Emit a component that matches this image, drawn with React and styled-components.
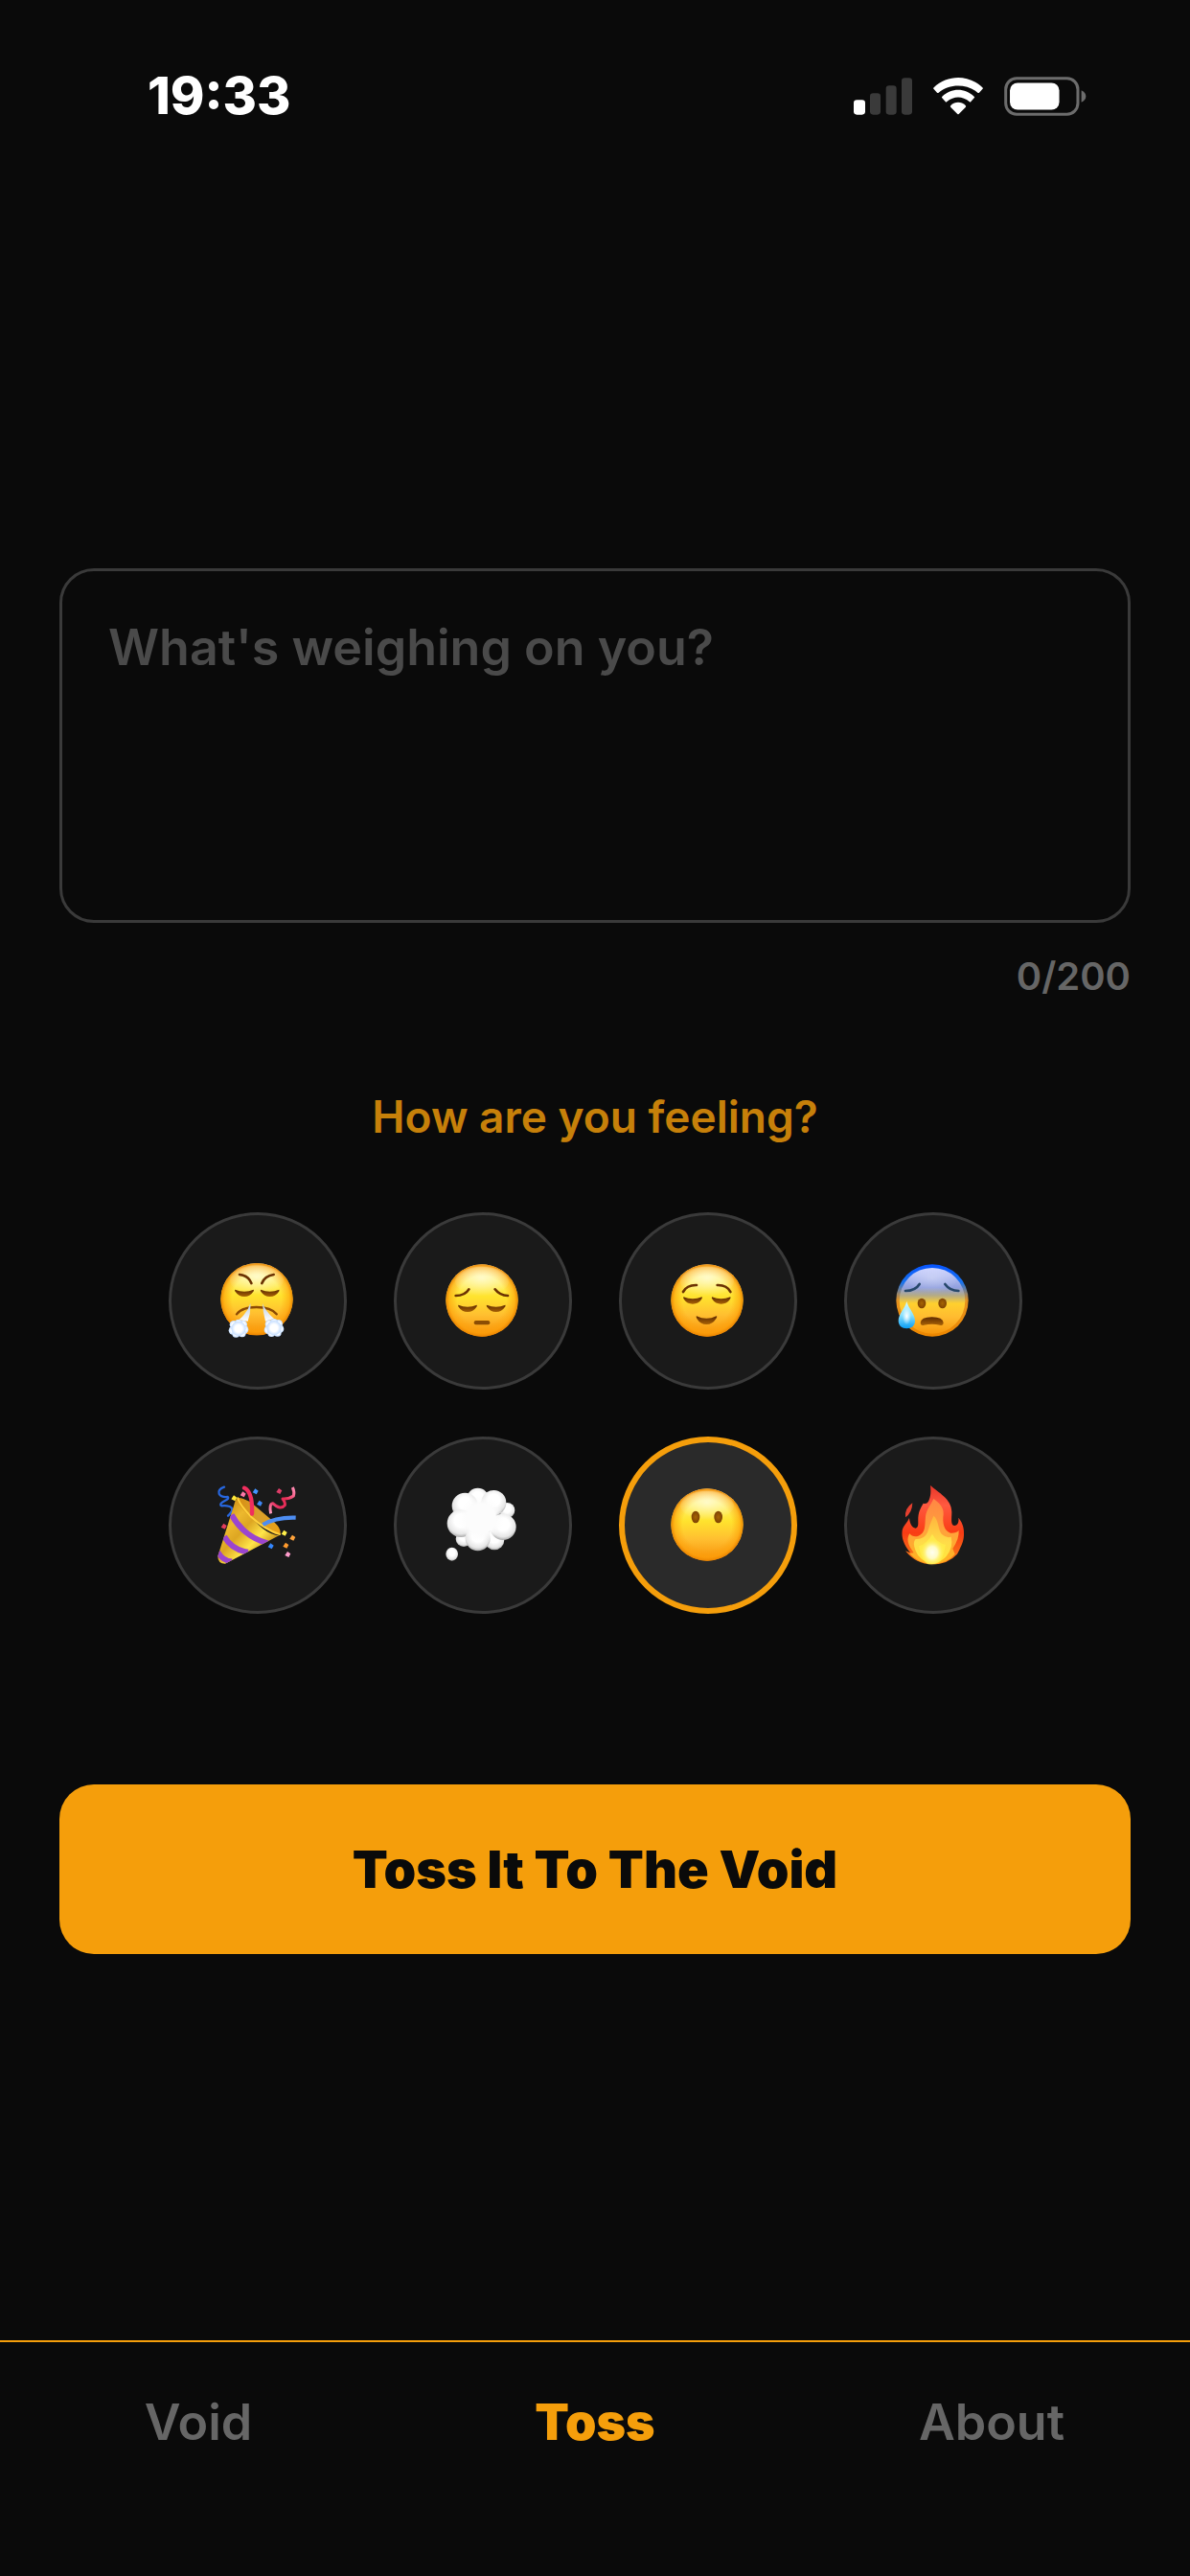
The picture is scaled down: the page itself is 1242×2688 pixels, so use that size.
import React, { useState } from 'react';
import styled, { createGlobalStyle } from 'styled-components';

const GlobalStyle = createGlobalStyle`
  * {
    box-sizing: border-box;
  }

  body {
    margin: 0;
    background: #0a0a0a;
    font-family: Inter, 'Liberation Sans', sans-serif;
  }

  button,
  textarea {
    font-family: inherit;
  }
`;

const Screen = styled.div`
  display: flex;
  flex-direction: column;
  min-height: 100vh;
  background: #0a0a0a;
`;

const StatusBar = styled.header`
  display: flex;
  align-items: center;
  justify-content: space-between;
  padding: 68px 108px 58px 154px;
`;

const Time = styled.span`
  color: #fff;
  font-size: 54px;
  line-height: 64px;
  font-weight: 800;
`;

const StatusIcons = styled.div`
  display: flex;
  align-items: center;
  gap: 22px;
`;

const Main = styled.main`
  display: flex;
  flex: 1;
  flex-direction: column;
  justify-content: center;
  padding: 0 62px;
`;

const ThoughtInput = styled.textarea`
  display: block;
  width: 100%;
  height: 370px;
  padding: 47px 48px;
  border: 3px solid #3a3a3a;
  border-radius: 36px;
  outline: none;
  resize: none;
  background: transparent;
  color: #fff;
  font-size: 52px;
  line-height: 66px;
  font-weight: 600;

  &::placeholder {
    color: #4a4a4a;
    opacity: 1;
  }
`;

const Counter = styled.span`
  margin-top: 31px;
  color: #666;
  font-size: 40px;
  line-height: 50px;
  font-weight: 600;
  text-align: right;
`;

const Question = styled.h2`
  margin: 92px 0 71px;
  color: #f59e0b;
  font-size: 46px;
  line-height: 58px;
  font-weight: 600;
  text-align: center;
  opacity: .8;
`;

const MoodGrid = styled.div`
  display: grid;
  grid-template-columns: repeat(4, 186px);
  justify-content: center;
  gap: 49px;
`;

const MoodButton = styled.button`
  display: flex;
  align-items: center;
  justify-content: center;
  height: 185px;
  padding: 0;
  border: ${props => props.$selected ? '6px solid #f59e0b' : '3px solid #3a3a3a'};
  border-radius: 50%;
  background: ${props => props.$selected ? '#2a2a2a' : '#1a1a1a'};
  cursor: pointer;
`;

const TossButton = styled.button`
  margin-top: 178px;
  padding: 56px;
  border: 0;
  border-radius: 36px;
  background: #f59e0b;
  color: #0a0a0a;
  font-size: 54px;
  line-height: 65px;
  font-weight: 900;
  cursor: pointer;
`;

const TabBar = styled.nav`
  display: grid;
  grid-template-columns: repeat(3, 1fr);
  padding: 48px 0 124px;
  border-top: 2px solid #f59e0b;
`;

const Tab = styled.a`
  color: ${props => props.$active ? '#f59e0b' : '#666'};
  font-size: 52px;
  line-height: 72px;
  font-weight: ${props => props.$active ? 900 : 600};
  text-align: center;
  text-decoration: none;
`;

const SignalIcon = () => (
  <svg width="61" height="39" viewBox="0 0 183 117" aria-hidden="true">
    <rect x="0" y="70" width="36" height="46" rx="10" fill="#fff" />
    <g fill="#3a3a3a">
      <rect x="51" y="49" width="33" height="67" rx="10" />
      <rect x="101" y="25" width="33" height="91" rx="10" />
      <rect x="150" y="1" width="33" height="115" rx="10" />
    </g>
  </svg>
);

const WifiIcon = () => (
  <svg width="52" height="39" viewBox="0 0 156 117" fill="#fff" aria-hidden="true">
    <path d="M2 31C45 -10 111 -10 154 31Q157 34 154 36L144 47Q142 49 139 47C105 18 51 18 17 47Q14 49 12 47L2 36Q-1 34 2 31Z" />
    <path d="M28 59C57 31 99 31 128 59Q131 62 128 64L118 75Q116 78 113 75C92 57 64 57 43 75Q40 78 38 75L28 64Q25 62 28 59Z" />
    <path d="M55 87C68 74 88 74 101 87Q104 90 101 93L80 114Q78 116 76 114L55 93Q52 90 55 87Z" />
  </svg>
);

const BatteryIcon = () => (
  <svg width="86" height="41" viewBox="0 0 257 122" aria-hidden="true">
    <rect x="5" y="5" width="225" height="112" rx="34" fill="none" stroke="#6c6c6c" strokeWidth="9" />
    <rect x="18" y="19" width="154" height="84" rx="24" fill="#fff" />
    <path d="M241 42Q255 49 255 61Q255 73 241 80Z" fill="#6c6c6c" />
  </svg>
);

// Gradients shared by all the mood drawings
const MoodDefs = () => (
  <svg width="0" height="0" style={{ position: 'absolute' }} aria-hidden="true">
    <defs>
      <linearGradient id="skin" x1="0" y1="0" x2="0" y2="1">
        <stop offset="0" stopColor="#fff4b0" />
        <stop offset=".2" stopColor="#fff373" />
        <stop offset=".45" stopColor="#ffe32e" />
        <stop offset=".7" stopColor="#ffbf30" />
        <stop offset="1" stopColor="#f79008" />
      </linearGradient>
      <radialGradient id="edge" cx=".5" cy=".5" r=".5">
        <stop offset=".68" stopColor="#fda008" stopOpacity="0" />
        <stop offset=".9" stopColor="#fd9f08" stopOpacity=".6" />
        <stop offset="1" stopColor="#e98200" stopOpacity=".95" />
      </radialGradient>
      <radialGradient id="shine" cx=".5" cy=".4" r=".6">
        <stop offset="0" stopColor="#fff" stopOpacity=".6" />
        <stop offset="1" stopColor="#fff" stopOpacity="0" />
      </radialGradient>
      <linearGradient id="coldSkin" x1="0" y1="0" x2="0" y2="1">
        <stop offset="0" stopColor="#ccd2ff" />
        <stop offset=".3" stopColor="#91a0df" />
        <stop offset=".42" stopColor="#b5ab85" />
        <stop offset=".54" stopColor="#ffd02e" />
        <stop offset=".75" stopColor="#ffbb30" />
        <stop offset="1" stopColor="#f7970c" />
      </linearGradient>
      <linearGradient id="coldTint" x1="0" y1="0" x2="0" y2="1">
        <stop offset="0" stopColor="#0754ff" />
        <stop offset=".25" stopColor="#1973ee" />
        <stop offset=".5" stopColor="#e59220" />
        <stop offset="1" stopColor="#ed8700" />
      </linearGradient>
      <linearGradient id="feature" x1="0" y1="0" x2="0" y2="1">
        <stop offset="0" stopColor="#5e2a02" />
        <stop offset="1" stopColor="#a86205" />
      </linearGradient>
      <radialGradient id="eye">
        <stop offset="0" stopColor="#a66404" />
        <stop offset="1" stopColor="#7d4203" />
      </radialGradient>
      <linearGradient id="tear" x1="0" y1="0" x2="0" y2="1">
        <stop offset="0" stopColor="#d8fbff" />
        <stop offset=".5" stopColor="#8ae2ff" />
        <stop offset="1" stopColor="#079cf5" />
      </linearGradient>
      <radialGradient id="tearShine">
        <stop offset="0" stopColor="#fff" />
        <stop offset="1" stopColor="#fff" stopOpacity="0" />
      </radialGradient>
      <linearGradient id="steam" x1="0" y1="0" x2="0" y2="1">
        <stop offset="0" stopColor="#b9cbe2" />
        <stop offset="1" stopColor="#fff" />
      </linearGradient>
      <radialGradient id="puff">
        <stop offset=".5" stopColor="#fff" />
        <stop offset="1" stopColor="#c2dcff" />
      </radialGradient>
      <linearGradient id="cone" x1="0" y1=".2" x2=".7" y2=".9">
        <stop offset="0" stopColor="#c88813" />
        <stop offset=".3" stopColor="#edb92e" />
        <stop offset=".5" stopColor="#dda622" />
        <stop offset=".75" stopColor="#ffe64a" />
        <stop offset="1" stopColor="#c98f16" />
      </linearGradient>
      <linearGradient id="coneInside" x1="0" y1="0" x2="1" y2="0">
        <stop offset="0" stopColor="#d88e12" />
        <stop offset=".5" stopColor="#d9a02c" />
        <stop offset="1" stopColor="#eaa014" />
      </linearGradient>
      <linearGradient id="ribbon" x1="0" y1="1" x2="1" y2="0">
        <stop offset="0" stopColor="#ffa2c4" />
        <stop offset=".3" stopColor="#e52c5c" />
        <stop offset=".6" stopColor="#e92d55" />
        <stop offset="1" stopColor="#ff8fb7" />
      </linearGradient>
      <radialGradient id="cloud" cx=".5" cy=".4" r=".6">
        <stop offset=".4" stopColor="#fff" />
        <stop offset=".8" stopColor="#e6e6e6" />
        <stop offset="1" stopColor="#a8a8a8" />
      </radialGradient>
      <radialGradient id="cloudCore">
        <stop offset=".65" stopColor="#fcfcfc" />
        <stop offset="1" stopColor="#fcfcfc" stopOpacity="0" />
      </radialGradient>
      <linearGradient id="flame" x1="0" y1="0" x2="0" y2="1">
        <stop offset="0" stopColor="#e83529" />
        <stop offset=".25" stopColor="#ff5940" />
        <stop offset=".6" stopColor="#f93c14" />
        <stop offset="1" stopColor="#f78618" />
      </linearGradient>
      <linearGradient id="flameMid" x1="0" y1="0" x2="0" y2="1">
        <stop offset="0" stopColor="#ff8744" />
        <stop offset=".5" stopColor="#ffa23b" />
        <stop offset="1" stopColor="#ffb620" />
      </linearGradient>
      <linearGradient id="flameCore" x1="0" y1="0" x2="0" y2="1">
        <stop offset="0" stopColor="#ffb43c" />
        <stop offset=".55" stopColor="#ffdc49" />
        <stop offset="1" stopColor="#ffe83a" />
      </linearGradient>
      <radialGradient id="flameGlow">
        <stop offset="0" stopColor="#fffff0" />
        <stop offset=".45" stopColor="#fffbc4" />
        <stop offset="1" stopColor="#ffef55" stopOpacity="0" />
      </radialGradient>
    </defs>
  </svg>
);

const Drawing = ({ children }) => (
  <svg width="100" height="100" viewBox="0 0 300 300" aria-hidden="true">{children}</svg>
);

const Face = ({ cy = 147 }) => (
  <>
    <circle cx="147" cy={cy} r="113" fill="url(#skin)" />
    <circle cx="147" cy={cy} r="113" fill="url(#edge)" />
    <ellipse cx="147" cy={cy - 60} rx="84" ry="46" fill="url(#shine)" />
  </>
);

const Brows = ({ d, color = '#6b3203' }) => (
  <path d={d} fill="none" stroke={color} strokeWidth="8" strokeLinecap="round" />
);

const ClosedEye = ({ x, y }) => (
  <path
    d={`M${x} ${y}Q${x + 29} ${y + 12} ${x + 58} ${y}Q${x + 60} ${y + 3} ${x + 56} ${y + 8}Q${x + 47} ${y + 22} ${x + 29} ${y + 22}Q${x + 11} ${y + 22} ${x + 2} ${y + 8}Q${x - 2} ${y + 3} ${x} ${y}Z`}
    fill="url(#feature)"
  />
);

const Puff = ({ x, y }) => (
  <g fill="url(#puff)">
    <circle cx={x - 15} cy={y - 12} r="13" />
    <circle cx={x + 14} cy={y - 13} r="13" />
    <circle cx={x - 18} cy={y + 6} r="13" />
    <circle cx={x + 18} cy={y + 3} r="13" />
    <circle cx={x - 8} cy={y + 16} r="12" />
    <circle cx={x + 11} cy={y + 15} r="12" />
    <circle cx={x} cy={y - 17} r="12" />
    <circle cx={x} cy={y} r="23" />
  </g>
);

const Frustrated = () => (
  <Drawing>
    <Face cy={143} />
    <Brows d="M93 66Q121 69 130 93M200 66Q172 70 163 93" />
    <ClosedEye x={79} y={113} />
    <ClosedEye x={159} y={113} />
    <path d="M84 190Q100 168 146 168Q192 168 209 190" fill="none" stroke="#8b4903" strokeWidth="7" strokeLinecap="round" />
    <path d="M127 156Q129 182 119 212L91 208Q117 186 127 156ZM165 156Q166 182 174 212L201 204Q175 182 165 156Z" fill="url(#steam)" />
    <Puff x={90} y={235} />
    <Puff x={201} y={233} />
  </Drawing>
);

const Sad = () => (
  <Drawing>
    <Face />
    <Brows d="M65 132Q94 132 106 112M188 112Q202 131 228 132" />
    <ClosedEye x={73} y={161} />
    <ClosedEye x={162} y={161} />
    <rect x="122" y="210" width="50" height="13" rx="6" fill="#8b4d04" />
  </Drawing>
);

const Calm = () => (
  <Drawing>
    <Face />
    <Brows d="M72 120Q84 98 114 99M179 99Q209 98 220 120" />
    <ClosedEye x={73} y={136} />
    <ClosedEye x={162} y={136} />
    <path d="M114 196Q145 211 176 196Q180 197 175 204Q164 222 145 222Q126 222 115 204Q111 197 114 196Z" fill="url(#feature)" />
  </Drawing>
);

const Anxious = () => (
  <Drawing>
    <circle cx="147" cy="147" r="113" fill="url(#coldTint)" />
    <circle cx="147" cy="148" r="103" fill="url(#coldSkin)" />
    <ellipse cx="147" cy="84" rx="74" ry="38" fill="url(#shine)" opacity=".5" />
    <Brows d="M63 117Q94 117 107 96M187 96Q202 117 229 117" color="#27486b" />
    <ellipse cx="114" cy="156" rx="13" ry="16" fill="url(#eye)" />
    <ellipse cx="179" cy="156" rx="13" ry="16" fill="url(#eye)" />
    <path d="M110 217Q111 199 146 199Q181 199 182 217Q182 227 171 224Q146 218 121 224Q110 227 110 217Z" fill="url(#feature)" />
    <path d="M67 150C73 173 93 189 93 211C93 226 82 235 67 235C52 235 41 226 41 211C41 189 61 173 67 150Z" fill="url(#tear)" />
    <ellipse cx="67" cy="196" rx="14" ry="27" fill="url(#tearShine)" />
  </Drawing>
);

const confetti = [
  [76, 64, '#ffe838'], [104, 52, '#ff78a8'], [143, 43, '#4294ff'], [156, 80, '#3e87f5'],
  [217, 42, '#dc3d68'], [44, 152, '#e33c5c'], [233, 173, '#fff04a'], [259, 188, '#ffa33b'],
  [238, 212, '#ff9b2e'], [191, 214, '#3487ff'], [244, 240, '#ff9ccc'],
];

const Excited = () => (
  <Drawing>
    <clipPath id="coneClip">
      <path d="M87 63Q79 69 75 88L25 245Q24 269 48 269L218 180Q160 180 87 63Z" />
    </clipPath>
    <path d="M45 29Q24 37 29 50Q35 62 56 60Q62 65 47 72Q27 82 37 88Q49 86 62 90Q80 98 57 119" fill="none" stroke="#2767df" strokeWidth="7" strokeLinecap="round" strokeLinejoin="round" />
    <path d="M87 63Q79 69 75 88L25 245Q24 269 48 269L218 180Q160 180 87 63Z" fill="url(#cone)" />
    <g clipPath="url(#coneClip)" fill="none" stroke="#9b45cf">
      <path d="M68 116Q105 184 183 206" strokeWidth="18" />
      <path d="M45 184Q70 227 120 233" strokeWidth="18" />
      <path d="M25 232Q42 262 70 262" strokeWidth="17" />
    </g>
    <path d="M87 64Q98 60 127 76L203 140Q222 158 221 173Q216 184 190 169Q140 145 98 93Q83 72 87 64Z" fill="url(#coneInside)" />
    <path d="M88 64Q92 83 130 123Q175 164 219 177" fill="none" stroke="#ffd23c" strokeWidth="6" strokeLinecap="round" />
    <path d="M108 32Q135 45 132 113" fill="none" stroke="#f02e5e" strokeWidth="13" strokeLinecap="round" />
    <path d="M166 147Q207 123 269 125" fill="none" stroke="#4d8df2" strokeWidth="13" />
    <path d="M191 112Q185 82 197 80Q222 103 235 86Q237 78 228 66Q248 67 262 57Q266 45 259 30" fill="none" stroke="url(#ribbon)" strokeWidth="9" strokeLinejoin="round" />
    {confetti.map(([x, y, color]) => (
      <path key={`${x}-${y}`} d={`M${x - 1} ${y - 9}L${x + 9} ${y - 2}L${x + 3} ${y + 9}L${x - 9} ${y + 3}Z`} fill={color} />
    ))}
  </Drawing>
);

const Thoughtful = () => (
  <Drawing>
    <g fill="url(#cloud)">
      <circle cx="134" cy="66" r="34" />
      <circle cx="226" cy="102" r="24" />
      <circle cx="90" cy="191" r="25" />
      <circle cx="186" cy="195" r="31" />
      <circle cx="94" cy="88" r="41" />
      <circle cx="184" cy="78" r="39" />
      <circle cx="81" cy="143" r="43" />
      <circle cx="213" cy="154" r="41" />
      <circle cx="134" cy="190" r="39" />
      <ellipse cx="53" cy="239" rx="19" ry="21" />
    </g>
    <circle cx="144" cy="128" r="72" fill="url(#cloudCore)" />
  </Drawing>
);

const Numb = () => (
  <Drawing>
    <Face />
    <ellipse cx="111" cy="123" rx="13" ry="19" fill="url(#eye)" />
    <ellipse cx="182" cy="123" rx="13" ry="19" fill="url(#eye)" />
  </Drawing>
);

const Fired = () => (
  <Drawing>
    <path d="M85 79Q60 96 63 124Q84 110 85 79Z" fill="#e5402f" />
    <path d="M141 24C165 46 208 66 208 107C208 128 204 147 216 150C227 149 231 139 229 125C245 145 247 162 246 180C245 204 235 217 232 226L225 239Q196 271 147 271Q96 271 63 229L78 235C57 208 50 187 53 165C56 149 69 142 75 126C77 145 84 157 95 158C106 156 102 140 103 124C105 101 114 90 119 80Q130 83 135 74C143 58 143 43 141 24Z" fill="url(#flame)" />
    <path d="M151 66C171 80 183 94 182 114C178 142 184 166 204 173Q222 174 230 165Q232 190 211 222L218 239Q195 267 147 270Q101 267 76 237L89 235C69 208 66 192 76 175Q84 186 102 183C127 172 123 155 126 121C129 99 141 88 151 66Z" fill="url(#flameMid)" />
    <path d="M151 119C168 132 164 162 177 177Q192 190 206 185Q214 218 191 246Q179 262 147 270Q106 260 95 229Q84 202 95 192Q121 194 132 171Q139 146 151 119Z" fill="url(#flameCore)" />
    <path d="M147 176Q162 205 189 209Q183 247 168 264Q154 273 132 270Q111 253 105 214Q132 205 147 176Z" fill="#fff04b" opacity=".7" />
    <ellipse cx="147" cy="234" rx="37" ry="42" fill="url(#flameGlow)" />
  </Drawing>
);

const moods = [
  { name: 'Frustrated', Icon: Frustrated },
  { name: 'Sad', Icon: Sad },
  { name: 'Calm', Icon: Calm },
  { name: 'Anxious', Icon: Anxious },
  { name: 'Excited', Icon: Excited },
  { name: 'Thoughtful', Icon: Thoughtful },
  { name: 'Numb', Icon: Numb },
  { name: 'Fired up', Icon: Fired },
];

const tabs = ['Void', 'Toss', 'About'];
const maxLength = 200;

const App = () => {
  const [text, setText] = useState('');
  const [mood, setMood] = useState('Numb');

  return (
    <Screen>
      <GlobalStyle />
      <MoodDefs />
      <StatusBar>
        <Time>19:33</Time>
        <StatusIcons>
          <SignalIcon />
          <WifiIcon />
          <BatteryIcon />
        </StatusIcons>
      </StatusBar>
      <Main>
        <ThoughtInput
          aria-label="What's weighing on you?"
          placeholder="What's weighing on you?"
          maxLength={maxLength}
          value={text}
          onChange={e => setText(e.target.value)}
        />
        <Counter>{text.length}/{maxLength}</Counter>
        <Question id="mood-question">How are you feeling?</Question>
        <MoodGrid role="group" aria-labelledby="mood-question">
          {moods.map(({ name, Icon }) => (
            <MoodButton
              key={name}
              type="button"
              aria-label={name}
              aria-pressed={mood === name}
              $selected={mood === name}
              onClick={() => setMood(name)}
            >
              <Icon />
            </MoodButton>
          ))}
        </MoodGrid>
        <TossButton type="button">Toss It To The Void</TossButton>
      </Main>
      <TabBar>
        {tabs.map(tab => (
          <Tab key={tab} href={`#${tab.toLowerCase()}`} $active={tab === 'Toss'}>{tab}</Tab>
        ))}
      </TabBar>
    </Screen>
  );
};

export default App;
